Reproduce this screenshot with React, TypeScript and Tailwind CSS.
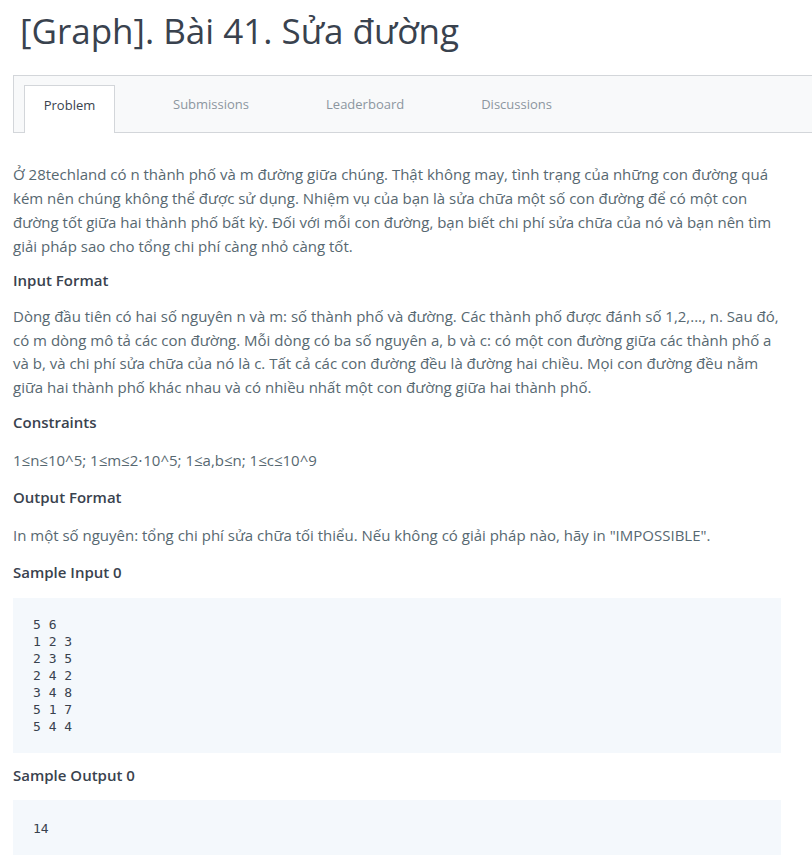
import React from 'react';

const tabs = ['Problem', 'Submissions', 'Leaderboard', 'Discussions'];

const sampleInput = `5 6
1 2 3
2 3 5
2 4 2
3 4 8
5 1 7
5 4 4`;

const Heading: React.FC<{ children: React.ReactNode; className?: string }> = ({ children, className = 'mb-[14px]' }) => (
  <h3 className={`text-[15px] font-semibold text-[#39424e] leading-[22px] ${className}`}>{children}</h3>
);

const Para: React.FC<{ children: React.ReactNode; className?: string }> = ({ children, className = '' }) => (
  <p className={`text-[15px] text-[#576871] ${className}`}>{children}</p>
);

const mono = { fontFamily: '"DejaVu Sans Mono", "Liberation Mono", monospace' };

const App: React.FC = () => {
  return (
    <div
      className="w-[812px] h-[866px] overflow-hidden bg-white pl-[13px]"
      style={{ fontFamily: '"Open Sans", "Noto Sans", sans-serif' }}
    >
      <h1 className="pl-[7px] pt-[9px] text-[35px] leading-[44px] text-[#39424e] font-normal">
        [Graph]. Bài 41. Sửa đường
      </h1>

      {/* tabs */}
      <div className="mt-[22px] w-[820px] h-[58px] border border-[#d3d6da] bg-[#f8f9fa] flex items-end pl-[10px]">
        {tabs.map((t, i) => (
          <div
            key={t}
            className={
              i === 0
                ? 'w-[91px] h-[48px] mb-[-1px] bg-white border border-b-0 border-[#d3d6da] flex justify-center pt-[9px] leading-[20px] text-[13px] text-[#39424e]'
                : 'h-[48px] pt-[10px] leading-[20px] text-[13px] text-[#8c969f]'
            }
            style={i === 1 ? { marginLeft: 58 } : i > 1 ? { marginLeft: 77 } : undefined}
          >
            {t}
          </div>
        ))}
      </div>

      <div className="w-[768px] pt-[29px]">
        <Para className="leading-[24px] mb-[11px]">
          Ở 28techland có n thành phố và m đường giữa chúng. Thật không may, tình trạng của những con đường quá
          kém nên chúng không thể được sử dụng. Nhiệm vụ của bạn là sửa chữa một số con đường để có một con
          đường tốt giữa hai thành phố bất kỳ. Đối với mỗi con đường, bạn biết chi phí sửa chữa của nó và bạn nên tìm
          giải pháp sao cho tổng chi phí càng nhỏ càng tốt.
        </Para>

        <Heading>Input Format</Heading>
        <Para className="leading-[23.5px] mb-[12px]">
          Dòng đầu tiên có hai số nguyên n và m: số thành phố và đường. Các thành phố được đánh số 1,2,..., n. Sau đó,
          có m dòng mô tả các con đường. Mỗi dòng có ba số nguyên a, b và c: có một con đường giữa các thành phố a
          và b, và chi phí sửa chữa của nó là c. Tất cả các con đường đều là đường hai chiều. Mọi con đường đều nằm
          giữa hai thành phố khác nhau và có nhiều nhất một con đường giữa hai thành phố.
        </Para>

        <Heading className="mb-[15px]">Constraints</Heading>
        <Para className="leading-[24px] mb-[14px]">1≤n≤10^5; 1≤m≤2⋅10^5; 1≤a,b≤n; 1≤c≤10^9</Para>

        <Heading className="mb-[15px]">Output Format</Heading>
        <Para className="leading-[24px] mb-[14px]">
          In một số nguyên: tổng chi phí sửa chữa tối thiểu. Nếu không có giải pháp nào, hãy in "IMPOSSIBLE".
        </Para>

        <Heading className="mb-[15px]">Sample Input 0</Heading>
        <pre
          className="bg-[#f4f8fc] px-[20px] pt-[18px] pb-[18px] text-[13px] leading-[17px] text-[#39424e] mb-[11px]"
          style={mono}
        >
          {sampleInput}
        </pre>

        <Heading>Sample Output 0</Heading>
        <pre
          className="bg-[#f4f8fc] px-[20px] pt-[20px] pb-[18px] text-[13px] leading-[17px] text-[#39424e]"
          style={mono}
        >
          14
        </pre>
      </div>
    </div>
  );
};

export default App;
